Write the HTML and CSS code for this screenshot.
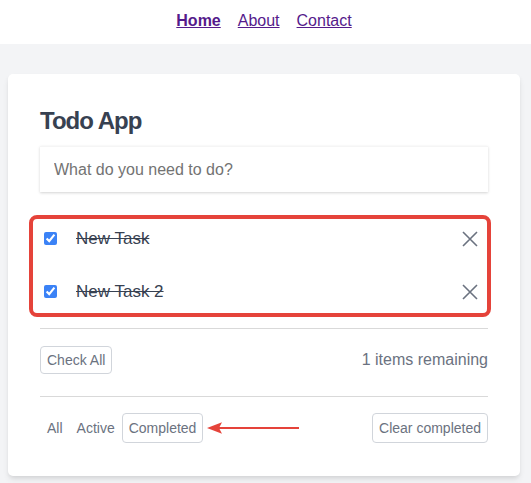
FILE: index.html
```html
<!DOCTYPE html>
<html lang="en">
<head>
<meta charset="utf-8">
<title>Todo App</title>
<link rel="stylesheet" href="styles.css">
</head>
<body>
<header class="topbar">
  <nav class="nav">
    <a href="#" class="nav-link active">Home</a>
    <a href="#" class="nav-link">About</a>
    <a href="#" class="nav-link">Contact</a>
  </nav>
</header>
<main class="main">
  <section class="card">
    <h1 class="title">Todo App</h1>
    <input class="new-todo" type="text" placeholder="What do you need to do?">
    <div class="list-wrap">
      <ul class="todo-list">
        <li class="todo">
          <input type="checkbox" class="todo-check" checked>
          <span class="todo-text">New Task</span>
          <button class="remove" aria-label="Remove">
            <svg width="16" height="16" viewBox="0 0 16 16"><path d="M1 1L15 15M15 1L1 15" stroke="#6b7280" stroke-width="1.6" fill="none"/></svg>
          </button>
        </li>
        <li class="todo">
          <input type="checkbox" class="todo-check" checked>
          <span class="todo-text">New Task 2</span>
          <button class="remove" aria-label="Remove">
            <svg width="16" height="16" viewBox="0 0 16 16"><path d="M1 1L15 15M15 1L1 15" stroke="#6b7280" stroke-width="1.6" fill="none"/></svg>
          </button>
        </li>
      </ul>
      <div class="highlight"></div>
    </div>
    <div class="row status-row">
      <button class="btn">Check All</button>
      <span class="remaining">1 items remaining</span>
    </div>
    <div class="row filter-row">
      <div class="filters">
        <button class="btn filter">All</button>
        <button class="btn filter">Active</button>
        <button class="btn filter selected">Completed</button>
        <svg class="arrow" width="96" height="16" viewBox="0 0 96 16"><path d="M10 8H92" stroke="#e5433a" stroke-width="2"/><path d="M0 8L15 2.3L12 8L15 13.7Z" fill="#e5433a"/></svg>
      </div>
      <button class="btn filter selected">Clear completed</button>
    </div>
  </section>
</main>
</body>
</html>
```

FILE: styles.css
```css
html, body {
  margin: 0;
  padding: 0;
}
body {
  font-family: "Liberation Sans", Arial, sans-serif;
  background: #f3f4f6;
  min-height: 483px;
}
.topbar {
  background: #ffffff;
  height: 44px;
  box-sizing: border-box;
  padding-top: 11px;
}
.nav {
  width: 512px;
  margin-left: 8px;
  display: flex;
  justify-content: center;
  gap: 17px;
  font-size: 16px;
  line-height: 20px;
}
.nav-link {
  color: #551a8b;
  text-decoration: underline;
}
.nav-link.active {
  font-weight: bold;
}
.main {
  padding: 30px 0 9px 8px;
}
.card {
  width: 512px;
  box-sizing: border-box;
  background: #ffffff;
  border-radius: 5px;
  box-shadow: 0 4px 6px -1px rgba(0,0,0,0.1), 0 2px 4px -1px rgba(0,0,0,0.06);
  padding: 32px 32px 33px;
}
.title {
  margin: 0;
  font-size: 24px;
  line-height: 30px;
  letter-spacing: -1px;
  font-weight: bold;
  color: #374151;
}
.new-todo {
  display: block;
  width: 100%;
  box-sizing: border-box;
  height: 46px;
  margin-top: 10px;
  border: none;
  border-top: 1px solid #f5f5f5;
  padding: 0 14px;
  font-family: inherit;
  font-size: 16px;
  color: #374151;
  box-shadow: 0 1px 3px 0 rgba(0,0,0,0.12), 0 1px 2px 0 rgba(0,0,0,0.06);
  outline: none;
}
.new-todo::placeholder {
  color: #737373;
}
.list-wrap {
  position: relative;
  margin-top: 20px;
  padding-bottom: 10px;
  border-bottom: 1px solid #d9d9d9;
}
.todo-list {
  list-style: none;
  margin: 0;
  padding: 0;
}
.todo {
  display: flex;
  align-items: center;
  height: 53px;
}
.todo-check {
  width: 13px;
  height: 13px;
  margin: 0 0 0 4px;
  accent-color: #3b82f6;
}
.todo-text {
  margin-left: 19px;
  flex: 1;
  font-size: 17px;
  color: #374151;
  text-decoration: line-through;
}
.remove {
  border: none;
  background: none;
  padding: 0;
  margin-right: 10px;
  width: 16px;
  height: 16px;
  display: flex;
}
.highlight {
  position: absolute;
  left: -11px;
  right: -3px;
  top: 3px;
  height: 102px;
  border: 4px solid #e5433a;
  border-radius: 8px;
  box-sizing: border-box;
  pointer-events: none;
}
.row {
  display: flex;
  align-items: center;
  justify-content: space-between;
}
.status-row {
  padding: 17px 0 22px;
  border-bottom: 1px solid #d9d9d9;
}
.btn {
  font-family: inherit;
  font-size: 14px;
  line-height: 17px;
  color: #6b7280;
  background: #ffffff;
  border: 1px solid #d1d5db;
  border-radius: 4px;
  padding: 5px 6px 4px;
}
.remaining {
  font-size: 16px;
  color: #6b7280;
}
.filter-row {
  padding-top: 16px;
}
.filters {
  display: flex;
  align-items: center;
  position: relative;
}
.filter {
  border-color: transparent;
  padding: 6px 6px 5px;
}
.filter.selected {
  border-color: #d1d5db;
}
.arrow {
  position: absolute;
  left: 167px;
  top: 7px;
}
```
